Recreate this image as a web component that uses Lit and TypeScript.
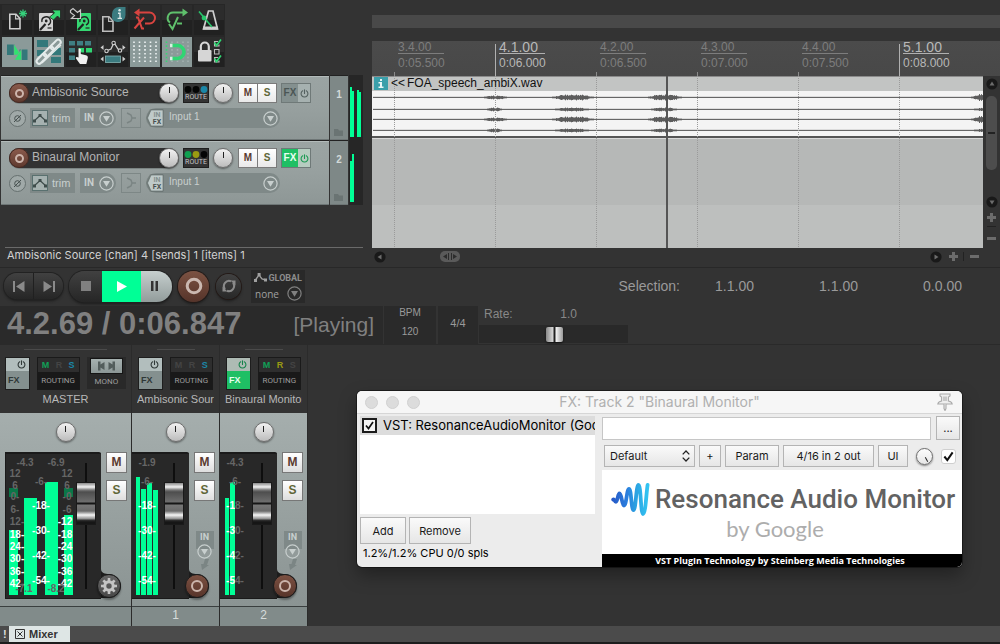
import { LitElement, html, svg, css, nothing } from "lit";
import { customElement, property } from "lit/decorators.js";

const GREEN = "#00ff96";

/* ---------- shared styles ---------- */

const base = css`
  * {
    box-sizing: border-box;
  }
  button,
  input,
  select {
    margin: 0;
    padding: 0;
    border: 0;
    font: inherit;
    color: inherit;
    background: none;
    border-radius: 0;
  }
  svg {
    display: block;
    flex: none;
  }
  .knob {
    appearance: none;
    -webkit-appearance: none;
    flex: none;
    width: 20px;
    height: 20px;
    border-radius: 50%;
    border: 1px solid #6d6d6d;
    background: linear-gradient(#f2f2f2, #bcbcbc);
    box-shadow: 0 1px 2px rgba(0, 0, 0, 0.45);
    display: block;
  }
  .knob::-webkit-slider-thumb {
    -webkit-appearance: none;
    width: 1px;
    height: 6px;
    margin-top: -6px;
    background: #222;
  }
`;

const power = (color: string, size = 10) => svg`
  <svg width=${size} height=${size} viewBox="0 0 10 10" fill="none" stroke=${color} stroke-width="1.2" stroke-linecap="round">
    <path d="M3 1.9A3.8 3.8 0 1 0 7 1.9M5 .8V5" />
  </svg>`;

const drop = (color: string) => svg`
  <svg width="15" height="15" viewBox="0 0 15 15" fill="none">
    <circle cx="7.5" cy="7.5" r="6.6" stroke=${color} stroke-width="1.2" />
    <path d="M4 5H11L7.5 10.8Z" fill=${color} />
  </svg>`;

/* ---------- toolbar icons ---------- */

const page = (x: number, y: number, c: string) => svg`
  <g transform="translate(${x} ${y})" fill="none" stroke=${c} stroke-width="1.6">
    <path d="M.8 .8H7L11 5V15.2H.8Z" /><path d="M6.6 1V5.4H11" stroke-width="1.1" />
  </g>`;

const disk = (x: number, y: number, c: string) => svg`
  <g transform="translate(${x} ${y})">
    <rect width="14" height="18" rx="1" fill=${c} />
    <path d="M3 9A4.300 4.300 0 1 1 9 12" fill="none" stroke="#222" stroke-width="1.4" />
    <circle cx="7.2" cy="8" r="1.4" fill="#222" />
    <path d="M1 17L6.500 11" stroke="#222" stroke-width="2.2" />
    <path d="M8.500 15H12.500" stroke="#222" stroke-width="1.2" />
  </g>`;

const lightDots = (xs: number[], c: string) =>
  xs.map((x) => svg`<path d="M${x} 4.5V26" stroke=${c} stroke-width="1.6" stroke-dasharray="1.6 2.2" />`);

const TOOLS: { label: string; on?: boolean; art: unknown }[] = [
  {
    label: "New project",
    art: svg`${page(7, 8.5, "#cfcfcf")}
      <path d="M21 4.5V12.5M17 8.5H25M18.2 5.7L23.8 11.3M23.8 5.7L18.2 11.3" stroke="#35d07a" stroke-width="1.3" />`,
  },
  {
    label: "Open project",
    art: svg`${disk(5, 8, "#d2d2d2")}
      <path d="M18 5H26.500V14L23.500 11L19.500 15L15.500 12L20.500 8Z" fill="#35d772" stroke="#222" stroke-width=".8" />`,
  },
  {
    label: "Save project",
    art: svg`${disk(11, 8, "#35d772")}
      <path d="M4.500 5.500L7 3.500L11.500 7.500L14.500 5V13.500H5.500L8.500 10.500L4.500 7.500Z" fill="#222" stroke="#c8c8c8" stroke-width="1.2" />`,
  },
  {
    label: "Project settings",
    art: svg`${page(4, 11, "#bdbdbd")}
      <path d="M14 9A7 7 0 0 1 21 2H27.500V10A7 7 0 0 1 21 17H19A5 5 0 0 1 14 12Z" fill="#3b7b80" />
      <circle cx="21.6" cy="5.2" r="1.2" fill="#d8e6e6" />
      <path d="M20 8.2H22V13.2M19.6 13.4H24" fill="none" stroke="#d8e6e6" stroke-width="1.4" />`,
  },
  {
    label: "Undo",
    art: svg`<g fill="none" stroke="#d94440" stroke-width="2">
      <path d="M8 7.5H19.500A5.500 5.500 0 0 1 19.500 18.500H15" /><path d="M6 12.500H8L12 23.500H14M14 12.500L4.500 23.500" />
      </g><path d="M4 7.5L9.500 3.6V11.4Z" fill="#d94440" />`,
  },
  {
    label: "Redo",
    art: svg`<g fill="none" stroke="#5fc06c" stroke-width="2">
      <path d="M22 7.5H11A5.500 5.500 0 0 0 8 17.500" /><path d="M7 19L10.500 24L16 12M15 18.500H20" />
      </g><path d="M26 7.5L20.500 3.6V11.4Z" fill="#5fc06c" />`,
  },
  {
    label: "Metronome",
    art: svg`<path d="M14.5 6H19L23.5 24H9.5Z" fill="none" stroke="#cfcfcf" stroke-width="1.7" />
      <path d="M9 21.5H24V24.5H9Z" fill="#cfcfcf" />
      <path d="M5 6.5L18 22" stroke="#28c76c" stroke-width="1.6" /><circle cx="10" cy="13" r="2.4" fill="#28c76c" />`,
  },
  {
    label: "Crossfade",
    on: true,
    art: svg`<rect x="5" y="7.500" width="8" height="10.500" fill="#33787a" /><rect x="17.500" y="12.500" width="8" height="10.500" fill="#33787a" />
      <path d="M12 7V18H19Z" fill="#2fe36f" stroke="#8b9a99" stroke-width=".5" />
      <path d="M18.500 12V23H11.500Z" fill="#2fe36f" stroke="#8b9a99" stroke-width=".5" transform="translate(1 0)" />`,
  },
  {
    label: "Item grouping",
    on: true,
    art: svg`<g fill="#33787a"><rect x="3" y="3" width="11" height="7" /><rect x="18" y="11" width="9" height="7" /><rect x="3" y="13" width="8" height="6" /><rect x="17" y="20" width="10" height="6" /></g>
      <g transform="rotate(-45 15 15)" fill="none" stroke="#e4eaea" stroke-width="2"><rect x="-1" y="12" width="12" height="5" rx="2.5" /><rect x="9" y="12" width="12" height="5" rx="2.5" /><rect x="19" y="12" width="12" height="5" rx="2.5" /></g>
      <path d="M3 22L22 4M8 26L27 8" stroke="#e4eaea" stroke-width="1.2" />`,
  },
  {
    label: "Ripple editing",
    art: svg`<g fill="#3f7f83"><rect x="3" y="4" width="6" height="4.500" /><rect x="11" y="4" width="6" height="4.500" /><rect x="19" y="4" width="6" height="4.500" /><rect x="3" y="11" width="6" height="4.500" /><rect x="3" y="18.500" width="6" height="4.500" /></g>
      <path d="M12 11H18V15.500H15.500ZM20 11H26V15.500H20Z" fill="#2fd672" />
      <path d="M12.500 12.500C12.500 11.200 14.600 11.200 14.800 12.500V17L20 18.200C21.600 18.600 22 19.6 21.800 21L20.300 27H14L10 21.500C9.400 20.200 11 19.300 12.500 20.600Z" fill="#f0f0f0" />`,
  },
  {
    label: "Move envelope points",
    art: svg`<path d="M8 14L13 12L16 5.5L20 12L23 14" fill="none" stroke="#cfcfcf" stroke-width="1.3" />
      <g fill="#222" stroke="#cfcfcf" stroke-width="1.1"><circle cx="8.5" cy="14" r="1.7" /><circle cx="15.6" cy="6" r="1.7" /><circle cx="22" cy="13.6" r="1.7" /></g>
      <rect x="7.5" y="19" width="15" height="6.5" fill="#3b7b80" stroke="#86b3b4" stroke-width=".8" />
      <g fill="#cfcfcf"><path d="M2.5 10.5L5.5 8V13Z" /><path d="M27.5 10.5L24.5 8V13Z" /><path d="M2.5 22L5.5 19.5V24.5Z" /><path d="M27.5 22L24.5 19.5V24.5Z" /></g>`,
  },
  { label: "Grid lines", on: true, art: lightDots([4, 9.5, 15, 20.5, 26], "#eef3f3") },
  {
    label: "Snap",
    on: true,
    art: svg`${lightDots([4.5], "#35d772")}${lightDots([10, 15.500, 21, 26], "#a3b1b0")}
      <path d="M8 8.5H15.500A6.500 6.500 0 0 1 15.500 21.5H8" fill="none" stroke="#2fd672" stroke-width="3.600" />
      <path d="M8 8.5H10.5M8 21.5H10.5" stroke="#d9efe2" stroke-width="3.600" />`,
  },
  {
    label: "Locking",
    art: svg`<rect x="4" y="13" width="13.500" height="11.5" rx="1" fill="#d6d6d6" /><path d="M6.800 13V9.5A4 4 0 0 1 14.800 9.5V13" fill="none" stroke="#d6d6d6" stroke-width="2.2" />
      <g fill="none" stroke="#bdbdbd" stroke-width="1.1"><path d="M24 4.500H20.500V9H25V7.500M24 20.500H20.500V25H25V23.500" /><path d="M20.500 12.500H25V17H20.500Z" /></g>
      <path d="M20.500 5.5L22.500 8.5L27 2.5M20.500 21.5L22.500 24.5L27 18.5" fill="none" stroke="#2fd672" stroke-width="1.7" />`,
  },
];

/* ---------- track control panel ---------- */

@customElement("track-panel")
export class TrackPanel extends LitElement {
  @property() name = "";
  @property({ type: Number }) index = 1;
  @property({ type: Boolean }) fx = false;
  @property({ attribute: false }) leds: string[] = [];
  @property({ attribute: false }) bars: number[][] = [];

  static styles = [
    base,
    css`
      :host {
        display: flex;
        height: 65px;
        font-family: "Liberation Sans", Arial, sans-serif;
      }
      .panel {
        flex: 1;
        margin-left: 1px;
        padding: 7px 0 0 8px;
        border-top: 1px solid #222;
        border-bottom: 1px solid #6e7676;
        background: linear-gradient(#9ba4a3, #97a09f 50%, #8e9796);
        box-shadow: inset 0 1px 0 #b3bbba;
      }
      .row {
        display: flex;
        align-items: center;
        height: 20px;
      }
      .row + .row {
        margin-top: 5px;
      }
      .name {
        display: flex;
        align-items: center;
        width: 170px;
        height: 20px;
        border-radius: 10px;
        background: #323232;
        box-shadow: 0 1px 0 #7b8483;
      }
      .arm {
        display: grid;
        place-items: center;
        width: 20px;
        height: 20px;
        border: 1px solid #4a2a22;
        border-radius: 50%;
        background: linear-gradient(#8a5a4c, #5e3a2f);
      }
      .arm i {
        width: 9px;
        height: 9px;
        border: 2px solid #cdb5ac;
        border-radius: 50%;
      }
      .title {
        flex: 1;
        width: 0;
        margin: 0 3px 3px;
        font-size: 12px;
        line-height: 16px;
        color: #b4b4b4;
        overflow: hidden;
      }
      .route {
        width: 26px;
        height: 20px;
        margin: 0 4px;
        border: 1px solid #1f1f1f;
        background: #333;
        color: #c4c4c4;
        font: 7px/8px Roboto, sans-serif;
      }
      .route svg {
        margin: 0 auto;
      }
      .ms {
        display: flex;
        gap: 1px;
        margin: 0 4px 0 5px;
        padding: 1px;
        border: 0;
        background: #7b7b7b;
        font: bold 10px/18px "Liberation Sans", Arial, sans-serif;
      }
      .ms button {
        width: 18px;
        height: 18px;
        background: linear-gradient(#fff, #e9e9e9);
        color: #5a3a30;
      }
      .ms button + button {
        color: #5f6638;
      }
      .fx {
        display: flex;
        height: 20px;
        border: 1px solid #6f7978;
      }
      .fx button {
        width: 16px;
        background: #84908f;
        color: #4b5655;
        font: bold 10px/18px "Liberation Sans", Arial, sans-serif;
      }
      .fx button + button {
        display: grid;
        place-items: center;
        width: 12px;
        background: #a6b1b0;
      }
      .fx.on button {
        background: #1fbf64;
        color: #e8fff0;
      }
      .fx.on button + button {
        background: #b6ccc0;
      }
      .phase {
        display: grid;
        place-items: center;
        width: 17px;
        height: 17px;
        border: 1px solid #66706f;
        border-radius: 50%;
        background: #a0a9a8;
      }
      .well {
        display: flex;
        align-items: center;
        height: 20px;
        background: #7f8988;
        color: #c8cfce;
        font-size: 11px;
      }
      .trim {
        width: 45px;
        margin: 0 5px 0 4px;
        padding-left: 2px;
        gap: 4px;
      }
      .env {
        display: grid;
        place-items: center;
        width: 16px;
        height: 16px;
        border: 1px solid #59706f;
        background: #a5b1b0;
      }
      .in {
        width: 36px;
        justify-content: space-between;
        padding: 0 2px 0 4px;
        border-radius: 0 10px 10px 0;
        font: bold 10px/20px Roboto, sans-serif;
      }
      .mode {
        display: grid;
        place-items: center;
        width: 20px;
        height: 20px;
        margin: 0 5px;
        border: 1px solid #7d8786;
      }
      .input {
        width: 134px;
        padding-right: 2px;
        border-radius: 10px;
        font-size: 10px;
      }
      .input span {
        flex: 1;
        padding: 0 0 3px 5px;
        text-align: left;
      }
      .index {
        position: relative;
        display: grid;
        place-items: center;
        width: 18px;
        margin-left: 1px;
        border-top: 1px solid #222;
        border-bottom: 1px solid #6e7676;
        background: #7e8887;
        color: #d3dad9;
        font: bold 10px/12px "Liberation Sans", Arial, sans-serif;
      }
      .index svg {
        position: absolute;
        left: 4px;
        bottom: 3px;
      }
      .meter {
        width: 14px;
        margin: 0 1px;
        background: #262626;
      }
    `,
  ];

  render() {
    return html`
      <div class="panel">
        <div class="row">
          <div class="name">
            <button class="arm" aria-label="Record arm"><i></i></button>
            <span class="title">${this.name}</span>
            <input class="knob" type="range" aria-label="Volume" />
          </div>
          <button class="route">
            <svg width="24" height="8" viewBox="0 0 24 8">
              ${this.leds.map((c, i) => svg`<circle cx=${4 + i * 8} cy="4.5" r="3.4" fill=${c} />`)}</svg
            >ROUTE
          </button>
          <input class="knob" type="range" aria-label="Pan" />
          <div class="ms"><button aria-label="Mute">M</button><button aria-label="Solo">S</button></div>
          <div class="fx ${this.fx ? "on" : ""}">
            <button>FX</button><button aria-label="Bypass effects">${power(this.fx ? "#1a9a52" : "#53605f", 9)}</button>
          </div>
        </div>
        <div class="row">
          <button class="phase" aria-label="Phase">
            <svg width="11" height="11" viewBox="0 0 11 11" fill="none" stroke="#46504f">
              <circle cx="5.5" cy="5.5" r="2.8" /><path d="M2 9L9 2" />
            </svg>
          </button>
          <div class="well trim">
            <button class="env" aria-label="Envelope">
              <svg width="14" height="10" viewBox="0 0 14 10" fill="none" stroke="#3e4c4b" stroke-width="1.2">
                <path d="M1 8L7 2.5L13 8" /><path d="M0 6.5H3V9.5H0ZM5.5 1H8.5V4H5.5ZM11 6.5H14V9.5H11Z" fill="#3e4c4b" stroke="none" />
              </svg></button
            >trim
          </div>
          <button class="well in">IN ${drop("#c8cfce")}</button>
          <button class="mode" aria-label="Record mode">
            <svg width="10" height="12" viewBox="0 0 10 12" fill="none" stroke="#7a8483" stroke-width="1.4">
              <path d="M1 1L5 3L6 6L5 9L1 11M6 6H10" />
            </svg>
          </button>
          <button class="well input">
            <svg width="18" height="20" viewBox="0 0 18 20">
              <path d="M0 10L4 1H17.5V19H4Z" fill="#69736f" opacity=".5" />
              <path d="M1.5 10L5 2H17V18H5Z" fill="#bfcac9" stroke="#5c6665" stroke-width=".6" />
              <g font-family="Roboto, sans-serif" font-weight="bold" text-anchor="middle" font-size="7">
                <text x="11" y="9" fill="#84908f">IN</text>
                <text x="11" y="16" fill="#48504f">FX</text>
              </g></svg
            ><span>Input 1</span>${drop("#c8cfce")}
          </button>
        </div>
      </div>
      <div class="index">
        ${this.index}<svg width="9" height="8" viewBox="0 0 9 8"><path d="M0 1H4L5 2.5H9V8H0Z" fill="#6a7473" /></svg>
      </div>
      <svg class="meter" width="14" height="65">
        ${this.bars.map(([x, y, w]) => svg`<rect x=${x} y=${y} width=${w} height=${62 - y} fill=${GREEN} />`)}
      </svg>
    `;
  }
}

/* ---------- transport ---------- */

@customElement("transport-bar")
export class TransportBar extends LitElement {
  static styles = [
    base,
    css`
      :host {
        display: block;
        border-top: 1px solid #282828;
        background: #333;
        color: #9a9a9a;
        font-family: "Liberation Sans", Arial, sans-serif;
      }
      .controls {
        display: flex;
        align-items: center;
        height: 38px;
        padding: 0 38px 2px 4px;
      }
      .skip,
      .main {
        display: flex;
        overflow: hidden;
        background: linear-gradient(#414141, #262626);
        box-shadow: 0 0 0 1px #222, 0 2px 3px #1b1b1b;
      }
      .skip {
        height: 26px;
        border-radius: 13px;
        margin-right: 6px;
      }
      .main {
        height: 31px;
        border-radius: 16px;
        margin-right: 6px;
      }
      .skip button,
      .main button {
        display: grid;
        place-items: center;
        width: 29px;
      }
      .skip button + button {
        border-left: 1px solid #202020;
        width: 30px;
      }
      .main .stop {
        width: 33px;
      }
      .main .play {
        width: 39px;
        background: #00ff96;
      }
      .main .pause {
        width: 31px;
        background: linear-gradient(#c6cfce, #929c9b);
        padding-right: 4px;
      }
      .round {
        display: grid;
        place-items: center;
        width: 31px;
        height: 31px;
        margin-right: 7px;
        border-radius: 50%;
        background: linear-gradient(#7c5242, #56342a);
        box-shadow: 0 0 0 1px #241a17, 0 2px 3px #1b1b1b;
      }
      .loop {
        width: 25px;
        height: 25px;
        margin-right: 10px;
        background: linear-gradient(#414141, #282828);
      }
      .global {
        width: 54px;
        height: 33px;
        background: #292929;
        font: bold 9px/16px Roboto, sans-serif;
        color: #8c8c8c;
      }
      .global div {
        display: flex;
        align-items: center;
        justify-content: space-between;
        height: 16px;
        padding: 0 3px 0 3px;
      }
      .global div:last-child {
        padding: 0 3px 0 4px;
        font: 10px/14px "Open Sans", sans-serif;
        color: #a0a0a0;
      }
      .selection {
        display: grid;
        grid-template-columns: 64px 74px 104px 104px;
        margin-left: auto;
        font-size: 14px;
        line-height: 18px;
        text-align: right;
      }
      .display {
        display: flex;
        height: 39px;
        border-bottom: 1px solid #2a2a2a;
      }
      .time {
        display: flex;
        align-items: center;
        justify-content: space-between;
        width: 383px;
        margin-right: 1px;
        padding: 0 9px 2px 7px;
        background: #2a2a2a;
        color: #808080;
      }
      .time b {
        font-size: 31px;
        line-height: 36px;
      }
      .time span {
        padding-top: 1px;
        font-size: 21px;
        line-height: 30px;
      }
      .cell {
        display: flex;
        flex-direction: column;
        align-items: center;
        justify-content: space-between;
        width: 52px;
        margin-right: 2px;
        padding: 0 0 5px;
        background: #2a2a2a;
        font-size: 10px;
        line-height: 14px;
      }
      .sig {
        justify-content: center;
        width: 40px;
        margin-right: 1px;
        font-size: 11px;
      }
      .rate {
        width: 149px;
      }
      .rate label {
        display: flex;
        justify-content: space-between;
        height: 19px;
        padding: 0 51px 0 5px;
        font-size: 12px;
        line-height: 17px;
        color: #888;
      }
      .rate input {
        -webkit-appearance: none;
        appearance: none;
        display: block;
        width: 100%;
        height: 18px;
        background: #292929;
      }
      .rate input::-webkit-slider-thumb {
        -webkit-appearance: none;
        width: 17px;
        height: 15px;
        border-radius: 2px;
        background: linear-gradient(90deg, #888, #d8d8d8 7px, #222 8px, #222 9px, #f4f4f4 10px, #999);
        box-shadow: 0 1px 2px #111;
      }
    `,
  ];

  render() {
    return html`
      <div class="controls">
        <div class="skip">
          <button aria-label="Go to start">
            <svg width="12" height="11" viewBox="0 0 12 11" fill="#8a8a8a"><path d="M0 0H2V11H0ZM11.5 0V11L3 5.5Z" /></svg>
          </button>
          <button aria-label="Go to end">
            <svg width="12" height="11" viewBox="0 0 12 11" fill="#8a8a8a"><path d="M10 0H12V11H10ZM.5 0V11L9 5.5Z" /></svg>
          </button>
        </div>
        <div class="main">
          <button class="stop" aria-label="Stop">
            <svg width="10" height="10"><rect width="10" height="10" fill="#808080" /></svg>
          </button>
          <button class="play" aria-label="Play">
            <svg width="10" height="11" viewBox="0 0 10 11"><path d="M0 0L10 5.5L0 11Z" fill="#fff" /></svg>
          </button>
          <button class="pause" aria-label="Pause">
            <svg width="7" height="10" viewBox="0 0 7 10"><path d="M0 0H2.500V10H0ZM4.500 0H7V10H4.500Z" fill="#333" /></svg>
          </button>
        </div>
        <button class="round" aria-label="Record">
          <svg width="18" height="18"><circle cx="9" cy="9" r="6.8" fill="none" stroke="#cbb8b0" stroke-width="3" /></svg>
        </button>
        <button class="round loop" aria-label="Repeat">
          <svg width="16" height="16" viewBox="0 0 16 16" fill="none" stroke="#8a8a8a" stroke-width="2">
            <path d="M4 11.200A5.200 5.200 0 0 1 10 3.200M12 4.800A5.200 5.200 0 0 1 6 12.800" />
            <path d="M1.500 8.500V13.500H6.500ZM14.500 7.500V2.500H9.500Z" fill="#8a8a8a" stroke="none" />
          </svg>
        </button>
        <div class="global">
          <div>
            <svg width="13" height="9" viewBox="0 0 13 9" fill="none" stroke="#a0a0a0" stroke-width="1.3">
              <path d="M1 7.5L5 2L8 6L12 7" /><path d="M0 6H3V9H0ZM3.6 0H6.6V3H3.6ZM10 5.5H13V8.5H10Z" fill="#a0a0a0" stroke="none" /></svg
            ><span>GLOBAL</span>
          </div>
          <div>none ${drop("#808080")}</div>
        </div>
        <div class="selection"><span>Selection:</span><span>1.1.00</span><span>1.1.00</span><span>0.0.00</span></div>
      </div>
      <div class="display">
        <div class="time"><b>4.2.69 / 0:06.847</b><span>[Playing]</span></div>
        <div class="cell"><span>BPM</span><span>120</span></div>
        <div class="cell sig">4/4</div>
        <div class="rate">
          <label for="rate"><span>Rate:</span><span>1.0</span></label>
          <input id="rate" type="range" min="0" max="100" value="51" />
        </div>
      </div>
    `;
  }
}

/* ---------- mixer strip ---------- */

type Mark = [x: number, y: number, text: string, lit?: number];

@customElement("mixer-strip")
export class MixerStrip extends LitElement {
  @property() name = "";
  @property() number = "";
  @property({ type: Boolean, reflect: true }) master = false;
  @property({ type: Boolean }) fx = false;
  @property({ attribute: false }) mrs: string[] = [];
  @property({ attribute: false }) bars: number[][] = [];
  @property({ attribute: false }) clips: number[] = [];
  @property({ attribute: false }) marks: Mark[] = [];

  static styles = [
    base,
    css`
      :host {
        display: flex;
        flex-direction: column;
        width: 88px;
        border-right: 1px solid #2b2b2b;
        font-family: "Liberation Sans", Arial, sans-serif;
      }
      :host([master]) {
        width: 132px;
      }
      .head {
        height: 68px;
        padding: 4px 6px 0;
      }
      :host([master]) .head {
        padding: 4px 5px 0;
      }
      .grip {
        width: 38px;
        height: 1px;
        margin: 0 auto 7px;
        background: #4a4a4a;
      }
      :host([master]) .grip {
        width: 83px;
      }
      .buttons {
        display: flex;
        gap: 7px;
      }
      .fx {
        width: 25px;
        height: 33px;
        border: 1px solid #1e1e1e;
        background: linear-gradient(#b2bebd 13px, #84908f 13px);
        color: #2f3837;
        text-align: left;
        font: bold 9px/14px "Liberation Sans", Arial, sans-serif;
      }
      .fx svg {
        margin: 0 3px 4px auto;
      }
      .fx.on {
        background: linear-gradient(#aebbb4 13px, #1fbf64 13px);
        color: #e6fff0;
      }
      .fx span {
        padding-left: 2px;
      }
      .routing {
        width: 44px;
        height: 33px;
        border: 1px solid #1a1a1a;
        background: linear-gradient(#2e2e2e 14px, #191919 14px);
        color: #9c9c9c;
        font: 8px/16px Roboto, sans-serif;
      }
      .routing div {
        display: flex;
        justify-content: space-around;
        padding: 0 1px;
        font: bold 9px/15px "Liberation Sans", Arial, sans-serif;
      }
      .mono {
        width: 40px;
        height: 32px;
        background: #292929;
        color: #9c9c9c;
        font: 8px/14px Roboto, sans-serif;
      }
      .mono div {
        display: grid;
        place-items: center;
        height: 16px;
        margin: 0 3px 1px;
        border: 1px solid #151515;
        background: linear-gradient(#a6b1b0, #8c9796);
      }
      .label {
        margin: 2px -1px 0;
        font-size: 11px;
        line-height: 15px;
        color: #b8b8b8;
        white-space: nowrap;
        overflow: hidden;
        text-align: left;
      }
      :host([master]) .label {
        text-align: center;
      }
      .body {
        flex: 1;
        background: linear-gradient(#a5aead, #98a1a0 50%, #8b9493);
      }
      .body .knob {
        margin: 9px auto 10px;
      }
      .lower {
        display: flex;
        justify-content: space-between;
        padding-right: 4px;
      }
      :host([master]) .lower {
        padding-left: 5px;
      }
      .pit {
        position: relative;
        display: flex;
        justify-content: flex-end;
        align-items: center;
        width: 57px;
        height: 147px;
        border: 1px solid #1a1a1a;
        border-width: 2px 0 1px 0;
        border-radius: 0 2px 0 0;
        background: #282828;
      }
      :host([master]) .pit {
        width: 96px;
        border-left-width: 1px;
      }
      .scale {
        position: absolute;
        left: 0;
        top: 0;
      }
      .fader {
        -webkit-appearance: none;
        appearance: none;
        writing-mode: vertical-lr;
        direction: rtl;
        width: 20px;
        height: 126px;
        margin: 0 5px 0 0;
        background: linear-gradient(90deg, transparent 9px, #0e0e0e 9px, #0e0e0e 11px, transparent 11px);
      }
      .fader::-webkit-slider-thumb {
        -webkit-appearance: none;
        width: 20px;
        height: 43px;
        border: 1px solid #1a1a1a;
        background: linear-gradient(
          #8a8a8a,
          #f2f2f2 4px,
          #777 7px,
          #4e4e4e 9px,
          #6e6e6e 19px,
          #161616 20px,
          #161616 21px,
          #777 22px,
          #6a6a6a 28px,
          #f6f6f6 32px,
          #8a8a8a 36px,
          #333 37px,
          #161616 39px
        );
      }
      .corner {
        position: absolute;
        right: -20px;
        bottom: -1px;
      }
      .corner button {
        position: absolute;
        right: 0;
        bottom: 1px;
        display: grid;
        place-items: center;
        width: 24px;
        height: 24px;
        border: 1px solid #1c1c1c;
        border-radius: 50%;
        background: linear-gradient(#7c5142, #57342a);
        box-shadow: 0 2px 2px rgba(0, 0, 0, 0.35);
      }
      :host([master]) .corner button {
        background: linear-gradient(#666, #484848);
      }
      .side {
        display: flex;
        flex-direction: column;
        gap: 7px;
        align-items: center;
      }
      .side .key {
        width: 21px;
        height: 21px;
        border: 1px solid #777;
        background: linear-gradient(#fff, #dedede);
        color: #5a3a30;
        font: bold 12px/19px "Liberation Sans", Arial, sans-serif;
      }
      .side .key + .key {
        color: #5f6638;
      }
      .arm-in {
        display: flex;
        flex-direction: column;
        align-items: center;
        width: 18px;
        margin-top: 23px;
        background: linear-gradient(#7f8988 18px, transparent 18px);
        color: #c8cfce;
        font: bold 9px/13px Roboto, sans-serif;
      }
      .foot {
        height: 20px;
        border-top: 1px solid #3a3f3f;
        background: #818b8a;
        color: #d6dcdb;
        font-size: 12px;
        line-height: 17px;
        text-align: center;
      }
    `,
  ];

  private mark([x, y, text, lit = 0]: Mark) {
    return svg`<text x=${x} y=${y + 4} text-anchor="middle"
      ><tspan fill="#fff">${text.slice(0, lit)}</tspan><tspan fill="#666">${text.slice(lit)}</tspan></text>`;
  }

  render() {
    return html`
      <div class="head">
        <div class="grip"></div>
        <div class="buttons">
          <button class="fx ${this.fx ? "on" : ""}">${power(this.fx ? "#14834a" : "#2f3837", 9)}<span>FX</span></button>
          <button class="routing">
            <div>${["M", "R", "S"].map((t, i) => html`<span style="color:${this.mrs[i]}">${t}</span>`)}</div>
            ROUTING
          </button>
          ${this.master
            ? html`<button class="mono">
                <div>
                  <svg width="17" height="10" viewBox="0 0 17 10" fill="#535d5c">
                    <path d="M0 .5H2.500V9.500H0ZM2.500 3.500L6.500 1V9L2.500 6.500ZM17 .5H14.500V9.500H17ZM14.500 3.500L10.500 1V9L14.500 6.500Z" />
                  </svg>
                </div>
                MONO
              </button>`
            : nothing}
        </div>
        <div class="label">${this.name}</div>
      </div>
      <div class="body">
        <input class="knob" type="range" aria-label="Pan" />
        <div class="lower">
          <div class="pit">
            <svg class="scale" width="76" height="144">
              ${this.bars.map(([x, y, w]) => svg`<rect x=${x} y=${y} width=${w} height=${141 - y} fill=${GREEN} />`)}
              ${this.clips.map((x) => svg`<rect x=${x} y="34" width="9" height="9" fill="#0a7748" />`)}
              <g font-size="10" font-weight="bold">${this.marks.map((m) => this.mark(m))}</g>
            </svg>
            <input class="fader" type="range" min="0" max="100" value="77" aria-label="Volume" />
            <div class="corner">
              <svg width="34" height="30" viewBox="0 0 34 30">
                <path d="M14 0C14 4 18 5 22 5A12 12 0 0 1 22 29H14Z" fill="#1c1c1c" />
              </svg>
              <button aria-label=${this.master ? "Settings" : "Record arm"}>
                ${this.master
                  ? svg`<svg width="18" height="18" viewBox="-9 -9 18 18" fill="none" stroke="#c4c4c4">
                      <circle r="4.2" stroke-width="3" />
                      ${[0, 45, 90, 135, 180, 225, 270, 315].map(
                        (a) => svg`<path d="M0 -5V-8" stroke-width="2.6" transform="rotate(${a})" />`
                      )}</svg>`
                  : svg`<svg width="14" height="14"><circle cx="7" cy="7" r="5" fill="none" stroke="#cbb5ac" stroke-width="2" /></svg>`}
              </button>
            </div>
          </div>
          <div class="side">
            <button class="key" aria-label="Mute">M</button>
            <button class="key" aria-label="Solo">S</button>
            ${this.master
              ? nothing
              : html`<button class="arm-in">
                  IN ${drop("#c8cfce")}
                  <svg width="8" height="11" viewBox="0 0 8 11"><path d="M4 0H8L6 6H8L1 11L0 5H2.5Z" fill="#7b8584" /></svg>
                </button>`}
          </div>
        </div>
      </div>
      <div class="foot">${this.number}</div>
    `;
  }
}

/* ---------- effects window ---------- */

@customElement("fx-window")
export class FxWindow extends LitElement {
  static styles = [
    base,
    css`
      :host {
        display: block;
        overflow: hidden;
        border-radius: 5px;
        background: #ececec;
        box-shadow: 0 0 0 1px rgba(0, 0, 0, 0.4), 0 8px 18px rgba(0, 0, 0, 0.35);
        color: #000;
        font: 11px/14px Inter, "Noto Sans", sans-serif;
      }
      header {
        display: grid;
        grid-template-columns: 58px 1fr 58px;
        align-items: center;
        height: 23px;
        padding: 0 8px;
        border-bottom: 1px solid #d6d6d6;
        background: #f6f6f6;
        color: #b0b0b0;
        font-size: 14px;
        line-height: 18px;
        text-align: center;
      }
      .lights {
        display: flex;
        gap: 8px;
      }
      .lights button {
        width: 13px;
        height: 13px;
        border: 1px solid #d0d0d0;
        border-radius: 50%;
        background: #dcdcdc;
      }
      .pin {
        justify-self: end;
      }
      .content {
        display: grid;
        grid-template-columns: 235px minmax(0, 1fr);
        gap: 7px;
        padding: 2px 0 0 3px;
      }
      .list {
        height: 98px;
        background: #fff;
      }
      .list label {
        display: flex;
        align-items: center;
        gap: 6px;
        height: 19px;
        padding-left: 2px;
        overflow: hidden;
        background: #dcdcdc;
        font-size: 13px;
        line-height: 17px;
        white-space: nowrap;
      }
      .check {
        -webkit-appearance: none;
        appearance: none;
        flex: none;
        width: 15px;
        height: 15px;
        border: 2px solid #1c1c1c;
        background: #f4f4f4 url("data:image/svg+xml,%3Csvg xmlns='http://www.w3.org/2000/svg' viewBox='0 0 11 11'%3E%3Cpath d='M2 5.5L4.5 8.5L9 2' fill='none' stroke='%23111' stroke-width='1.7'/%3E%3C/svg%3E");
      }
      .soft {
        border: 1px solid #cfcfcf;
        border-radius: 3px;
        background-color: #fff;
      }
      .buttons {
        display: flex;
        gap: 3px;
        margin: 3px 0;
      }
      .btn {
        border: 1px solid #b4b4b4;
        background: linear-gradient(#fafafa, #e6e6e6);
        color: #1a1a1a;
      }
      .buttons .btn {
        width: 46px;
        height: 27px;
      }
      .buttons .btn + .btn {
        width: 62px;
      }
      .cpu {
        margin-top: -1px;
        padding-left: 3px;
      }
      .top {
        display: flex;
        gap: 5px;
        padding-right: 2px;
      }
      .top input {
        flex: 1;
        width: 0;
        height: 23px;
        margin-top: 1px;
        border: 1px solid #c6c6c6;
        background: #fff;
      }
      .top .btn {
        width: 24px;
        height: 24px;
      }
      .options {
        display: flex;
        align-items: center;
        gap: 4px;
        height: 22px;
        margin: 5px 6px 3px 2px;
      }
      .options .btn {
        height: 22px;
      }
      .options select {
        -webkit-appearance: none;
        appearance: none;
        width: 91px;
        padding-left: 5px;
      }
      .select {
        position: relative;
      }
      .select svg {
        position: absolute;
        right: 5px;
        top: 5px;
        pointer-events: none;
      }
      .plus {
        width: 22px;
      }
      .param {
        width: 54px;
      }
      .io {
        width: 91px;
      }
      .ui {
        width: 30px;
      }
      .options .knob {
        width: 17px;
        height: 17px;
        margin: 0 auto;
        background: linear-gradient(#fdfdfd, #e6e6e6);
      }
      .options .knob::-webkit-slider-thumb {
        width: 1px;
        height: 5px;
        margin: 6px 0 0 2px;
        transform: rotate(-30deg);
      }
      .plugin {
        display: grid;
        grid-template-rows: 1fr 13px;
        height: 97px;
        background: #fff;
      }
      .brand {
        display: grid;
        grid-template-columns: 40px minmax(0, 1fr);
        gap: 0 5px;
        padding: 10px 5px 0 9px;
        align-content: start;
      }
      .brand h1 {
        margin: 0 0 0 -1px;
        font: 500 26px/38px Roboto, sans-serif;
        color: #626262;
        white-space: nowrap;
      }
      .brand p {
        grid-column: 1 / -1;
        margin: -2px 0 0;
        padding-right: 18px;
        text-align: center;
        font: 22px/26px Lato, sans-serif;
        color: #adadad;
      }
      footer {
        padding-right: 4px;
        background: #000;
        color: #fff;
        font: bold 9px/13px "Open Sans", sans-serif;
        text-align: center;
      }
    `,
  ];

  render() {
    return html`
      <header>
        <div class="lights">
          <button aria-label="Close"></button><button aria-label="Minimise"></button><button aria-label="Zoom"></button>
        </div>
        <span>FX: Track 2 "Binaural Monitor"</span>
        <button class="pin" aria-label="Pin">
          <svg width="18" height="18" viewBox="0 0 18 18" fill="#eee" stroke="#aaa" stroke-width="1.1">
            <path d="M4 1H14V3L12.4 4V8C15 8.6 16 9.6 16.2 11H1.8C2 9.6 3 8.6 5.6 8V4L4 3Z" /><path d="M8 11V15.5L9 17.5L10 15.5V11M8 3.5V8M10 3.5V8" />
          </svg>
        </button>
      </header>
      <div class="content">
        <div>
          <div class="list">
            <label><input class="check" type="checkbox" checked />VST: ResonanceAudioMonitor (Google)</label>
          </div>
          <div class="buttons"><button class="btn">Add</button><button class="btn">Remove</button></div>
          <div class="cpu">1.2%/1.2% CPU 0/0 spls</div>
        </div>
        <div>
          <div class="top"><input type="text" aria-label="Comment" /><button class="btn">...</button></div>
          <div class="options">
            <div class="select">
              <select class="btn" aria-label="Preset">
                <option>Default</option>
              </select>
              <svg width="8" height="12" viewBox="0 0 8 12" fill="none" stroke="#222" stroke-width="1.3">
                <path d="M.7 4.4L4 1L7.3 4.4M.7 7.6L4 11L7.3 7.6" />
              </svg>
            </div>
            <button class="btn plus">+</button><button class="btn param">Param</button
            ><button class="btn io">4/16 in 2 out</button><button class="btn ui">UI</button>
            <input class="knob" type="range" aria-label="Wet mix" />
            <input class="check soft" type="checkbox" checked aria-label="Enabled" />
          </div>
          <div class="plugin">
            <div class="brand">
              <svg width="40" height="38" viewBox="0 0 40 38" fill="none">
                <defs>
                  <linearGradient id="wave" gradientUnits="userSpaceOnUse" x1="0" y1="0" x2="40" y2="0">
                    <stop offset="0" stop-color="#2555c4" /><stop offset=".4" stop-color="#2a7ede" />
                    <stop offset=".6" stop-color="#2a9fe0" /><stop offset="1" stop-color="#35cdf6" />
                  </linearGradient>
                </defs>
                <path
                  d="M2.200 19.500C3.600 19 3.400 21.800 4.900 21.800C6.800 21.800 6.600 13.500 8.500 13.500C10.800 13.500 10.800 25.500 13 25.500C15.600 25.500 15.600 9 18 9C20.600 9 20 30 22.500 30C25 30 25 5 27.500 5C30 5 29.600 34 32 34C34.600 34 35.200 14 36.600 5"
                  stroke="url(#wave)"
                  stroke-width="3.8"
                  stroke-linecap="round"
                  stroke-linejoin="round"
                />
              </svg>
              <h1>Resonance Audio Monitor</h1>
              <p>by Google</p>
            </div>
            <footer>VST PlugIn Technology by Steinberg Media Technologies</footer>
          </div>
        </div>
      </div>
    `;
  }
}

/* ---------- page ---------- */

const RULER: [string, string, boolean][] = [
  ["3.4.00", "0:05.500", false],
  ["4.1.00", "0:06.000", true],
  ["4.2.00", "0:06.500", false],
  ["4.3.00", "0:07.000", false],
  ["4.4.00", "0:07.500", false],
  ["5.1.00", "0:08.000", true],
];

/* Each burst: start, end, half height on the loud lanes. */
const BURSTS: [number, number, number][] = [
  [112, 135, 2],
  [180, 222, 3],
  [276, 310, 3],
  [599, 640, 4],
];

const LANES = [21, 33, 43, 54];

function burst(lane: number, [from, to, h]: [number, number, number]) {
  const quiet = lane % 2 === 1;
  const peak = quiet ? Math.min(h, 2) : h;
  const a = quiet ? from + 3 : from;
  const b = quiet ? to - 5 : to;
  let d = "";
  for (let x = a; x < b; x++) {
    const t = Math.sin(((x - a + 1) / (b - a + 1)) * Math.PI);
    const n = 0.6 + 0.4 * Math.abs(Math.sin(x * 1.7) * Math.cos(x * 0.6));
    const v = Math.max(0.8, Math.min(1, t * 1.4) * n * peak);
    d += `M${x + 0.5} ${(LANES[lane] + 0.5 - v).toFixed(1)}v${(2 * v).toFixed(1)}`;
  }
  return svg`<path d=${d} stroke="#5c5c5c" />`;
}

const DB = (x: number, lit: number): Mark[] =>
  [
    [x, 51, "-18-", lit],
    [x, 76, "-30-", lit],
    [x, 101, "-42-", lit],
    [x, 126, "-54-", lit],
  ] as Mark[];

const LEFT = ["12", "6", "0-", "6-", "12-", "18-", "24-", "30-", "36-", "42-"];
const RIGHT = ["12", "6", "-0", "-6", "-12", "-18", "-24", "-30", "-36", "-42"];
const ROWS = [19, 31, 42, 55, 67, 80, 92, 104, 117, 129];

const MASTER_MARKS: Mark[] = [
  [19, 8, "-4.3"],
  [50, 8, "-6.9"],
  ...LEFT.map((t, i): Mark => [t.length > 2 ? 11 : 9, ROWS[i], t, i > 4 ? 3 : 0]),
  [35, 27, "-6-"],
  ...DB(35, 4),
  ...RIGHT.map((t, i): Mark => [t.length > 2 ? 59 : 61, ROWS[i], t, i > 3 ? 3 : 0]),
  [18, 134, "-7.1"],
  [50, 134, "-8.2"],
];

@customElement("app-root")
export class AppRoot extends LitElement {
  static styles = [
    base,
    css`
      :host {
        position: relative;
        display: flex;
        flex-direction: column;
        min-height: 100vh;
        overflow: hidden;
        background: #333;
        font-family: "Liberation Sans", Arial, sans-serif;
      }
      .top {
        display: grid;
        grid-template-columns: 364px minmax(0, 1fr);
        column-gap: 8px;
        height: 267px;
      }
      .left {
        display: flex;
        flex-direction: column;
      }
      .tools {
        display: grid;
        grid-template-columns: repeat(7, 30px);
        gap: 2px;
        width: 225px;
        margin: 4px 0 8px;
        padding: 1px 0 0 2px;
        background: #272727;
      }
      .tools button {
        height: 30px;
        background: linear-gradient(#2c2c2c 50%, #212121 50%);
      }
      .tools .on {
        background: #8b9a99;
      }
      .status {
        margin: auto 1px 4px 5px;
        padding: 0 0 0 2px;
        border-top: 1px solid #6a6a6a;
        color: #d2d2d2;
        font: 11px/15px Inter, sans-serif;
      }
      .right {
        display: grid;
        grid-template-columns: minmax(0, 1fr) 17px;
        grid-template-rows: 26px 35px 172px 17px;
        padding-top: 15px;
      }
      .overview {
        grid-column: 1 / -1;
        margin-bottom: 13px;
        background: #494949;
      }
      .ruler {
        grid-column: 1 / -1;
        display: flex;
        padding-left: 22px;
        background: linear-gradient(#4b4b4b, #484848);
        overflow-x: clip;
        color: #7d7d7d;
      }
      .tick {
        flex: none;
        width: 101px;
        padding: 0 0 0 4px;
        font-size: 12px;
        line-height: 12px;
        background: linear-gradient(#8a8a8a, #8a8a8a) 0 100% / 1px 4px no-repeat;
      }
      .tick span {
        display: block;
        width: 46px;
        border-bottom: 1px solid #7d7d7d;
      }
      .tick b {
        display: block;
        padding-top: 3px;
        font-weight: normal;
      }
      .beat {
        color: #b8b8b8;
        background: linear-gradient(#b0b0b0, #b0b0b0) 0 100% / 1px 32px no-repeat;
      }
      .beat span {
        border-color: #b0b0b0;
        font-size: 14px;
      }
      .canvas {
        overflow: hidden;
        background: #bdbfbe;
      }
      .vscroll {
        display: flex;
        flex-direction: column;
        align-items: center;
        padding-top: 2px;
      }
      .vthumb {
        display: grid;
        place-items: center;
        width: 11px;
        height: 74px;
        margin: 6px 0 26px;
        border-radius: 5px;
        background: #4d4d4d;
      }
      .vthumb::before {
        content: "";
        width: 7px;
        height: 2px;
        background: #222;
      }
      .vscroll .plus {
        margin: 5px 0 4px;
      }
      .vscroll hr {
        width: 9px;
        height: 1px;
        margin: 0 0 10px;
        border: 0;
        background: #222;
      }
      .hscroll {
        grid-column: 1 / -1;
        display: flex;
        align-items: center;
        height: 17px;
        padding: 0 21px 0 2px;
      }
      .hthumb {
        margin: 0 auto 0 54px;
      }
      .hscroll .plus {
        margin-left: 7px;
      }
      .hscroll hr {
        width: 1px;
        height: 9px;
        margin: 0 6px 0 5px;
        border: 0;
        background: #222;
      }
      .mixer {
        flex: 1;
        display: flex;
      }
      .tabs {
        display: flex;
        height: 18px;
        border-bottom: 2px solid #1d1d1d;
        background: #4b4b4b;
        color: #ddd;
        font: bold 11px/16px "Liberation Sans", Arial, sans-serif;
      }
      .tabs span {
        width: 9px;
        padding-left: 3px;
      }
      .tabs button {
        display: flex;
        align-items: center;
        gap: 4px;
        width: 61px;
        padding-left: 6px;
        background: #dee6e5;
        color: #333;
      }
      .floating {
        position: absolute;
        left: 357px;
        top: 391px;
        width: 605px;
      }
    `,
  ];

  private round(d: string) {
    return svg`<svg width="12" height="12" viewBox="0 0 12 12"><circle cx="6" cy="6" r="5.6" fill="#191919" /><path d=${d} fill="#6c6c6c" /></svg>`;
  }

  private plus() {
    return svg`<svg class="plus" width="9" height="9" viewBox="0 0 9 9"><path d="M3 0H6V3H9V6H6V9H3V6H0V3H3Z" fill="#6c6c6c" /></svg>`;
  }

  private minus() {
    return svg`<svg width="9" height="3"><rect width="9" height="3" fill="#6c6c6c" /></svg>`;
  }

  private canvas() {
    return html`<svg class="canvas" width="100%" height="172">
      <rect width="100%" height="129" fill="#b6b8b7" />
      <rect width="100%" height="62" fill="#f4f4f4" />
      <rect width="100%" height="15" fill="#c2c4c3" />
      <path d="M0 .5H4000" stroke="#8b8b8b" />
      <path d="M0 61H4000" stroke="#555" stroke-width="2" />
      <path d="M0 62.500H4000" stroke="#d8d8d8" />
      ${LANES.map(
        (y, i) => svg`<path d="M1 ${y + 0.5}H4000" stroke="#666" />
          <path d="M1 ${y - 0.5}H4000" stroke="#dcdcdc" />
          ${BURSTS.map((b) => burst(i, b))}`
      )}
      ${RULER.map(
        (_, i) =>
          svg`<path d="M${22.5 + i * 101} 0V172" stroke="#9a9a9a" stroke-dasharray="1 1" />`
      )}
      <rect x="2" y="1" width="14" height="13" fill="#3a9faa" />
      <path d="M8 3H10V5H8ZM6.500 6H10V10.500H11.500V12H6.500V10.500H8V7.500H6.500Z" fill="#e8f6f6" />
      <text y="11" font-size="12" fill="#111"><tspan x="19">&lt;&lt;</tspan><tspan x="35">FOA_speech_ambiX.wav</tspan></text>
      <rect x="294" width="2" height="172" fill="#555" />
    </svg>`;
  }

  render() {
    return html`
      <section class="top">
        <div class="left">
          <div class="tools">
            ${TOOLS.map(
              (t) => html`<button class=${t.on ? "on" : ""} aria-label=${t.label}>
                <svg width="30" height="30" viewBox="0 0 30 30">${t.art}</svg>
              </button>`
            )}
          </div>
          <track-panel
            name="Ambisonic Source"
            .index=${1}
            .leds=${["#050505", "#050505", "#1b87a8"]}
            .bars=${[[1, 12, 2], [3, 16, 2], [8, 15, 2], [10, 17, 2]]}
          ></track-panel>
          <track-panel
            name="Binaural Monitor"
            .index=${2}
            fx
            .leds=${["#0fa050", "#9a9a12", "#050505"]}
            .bars=${[[1, 21, 2], [3, 14, 2]]}
          ></track-panel>
          <div class="status">Ambisonic Source [chan] 4 [sends] 1 [items] 1</div>
        </div>
        <div class="right">
          <div class="overview"></div>
          <div class="ruler">
            ${RULER.map(
              ([a, b, beat]) => html`<div class="tick ${beat ? "beat" : ""}"><span>${a}</span><b>${b}</b></div>`
            )}
          </div>
          ${this.canvas()}
          <div class="vscroll">
            ${this.round("M6 3.500L8.500 7.500H3.500Z")}
            <div class="vthumb"></div>
            ${this.round("M6 8.500L8.500 4.500H3.500Z")} ${this.plus()}
            <hr />
            ${this.minus()}
          </div>
          <div class="hscroll">
            ${this.round("M3.500 6L7.500 3.500V8.500Z")}
            <svg class="hthumb" width="20" height="11" viewBox="0 0 20 11">
              <rect width="20" height="11" rx="5" fill="#5a5a5a" />
              <path d="M3 5.500L7 3V8ZM17 5.500L13 3V8Z" fill="#2c2c2c" /><path d="M8.500 2V9M11.500 2V9" stroke="#2c2c2c" />
            </svg>
            ${this.round("M8.500 6L4.500 3.500V8.500Z")} ${this.plus()}
            <hr />
            ${this.minus()}
          </div>
        </div>
      </section>

      <transport-bar></transport-bar>

      <section class="mixer">
        <mixer-strip
          master
          name="MASTER"
          .mrs=${["#10a058", "#444", "#1b87a8"]}
          .bars=${[[3, 76, 9], [18, 44, 13], [39, 28, 13], [58, 61, 9]]}
          .clips=${[3, 58]}
          .marks=${MASTER_MARKS}
        ></mixer-strip>
        <mixer-strip
          name="Ambisonic Source"
          number="1"
          .mrs=${["#444", "#444", "#1b87a8"]}
          .bars=${[[4, 23, 4], [9, 35, 5], [15, 29, 5], [21, 36, 5]]}
          .marks=${[[15, 8, "-1.9"], [15, 27, "-6-"], ...DB(15, 4)]}
        ></mixer-strip>
        <mixer-strip
          name="Binaural Monitor"
          number="2"
          fx
          .mrs=${["#10a058", "#9a9a12", "#444"]}
          .bars=${[[5, 44, 4], [10, 28, 5]]}
          .marks=${[[15, 8, "-4.3"], [15, 27, "-6-"], ...DB(15, 2)]}
        ></mixer-strip>
      </section>

      <div class="tabs">
        <span>!</span>
        <button>
          <svg width="10" height="10" viewBox="0 0 10 10" fill="none" stroke="#333"><path d="M.5 .5H9.500V9.500H.5ZM2.500 2.500L7.500 7.500M7.500 2.500L2.500 7.500" /></svg>Mixer
        </button>
      </div>

      <fx-window class="floating"></fx-window>
    `;
  }
}
